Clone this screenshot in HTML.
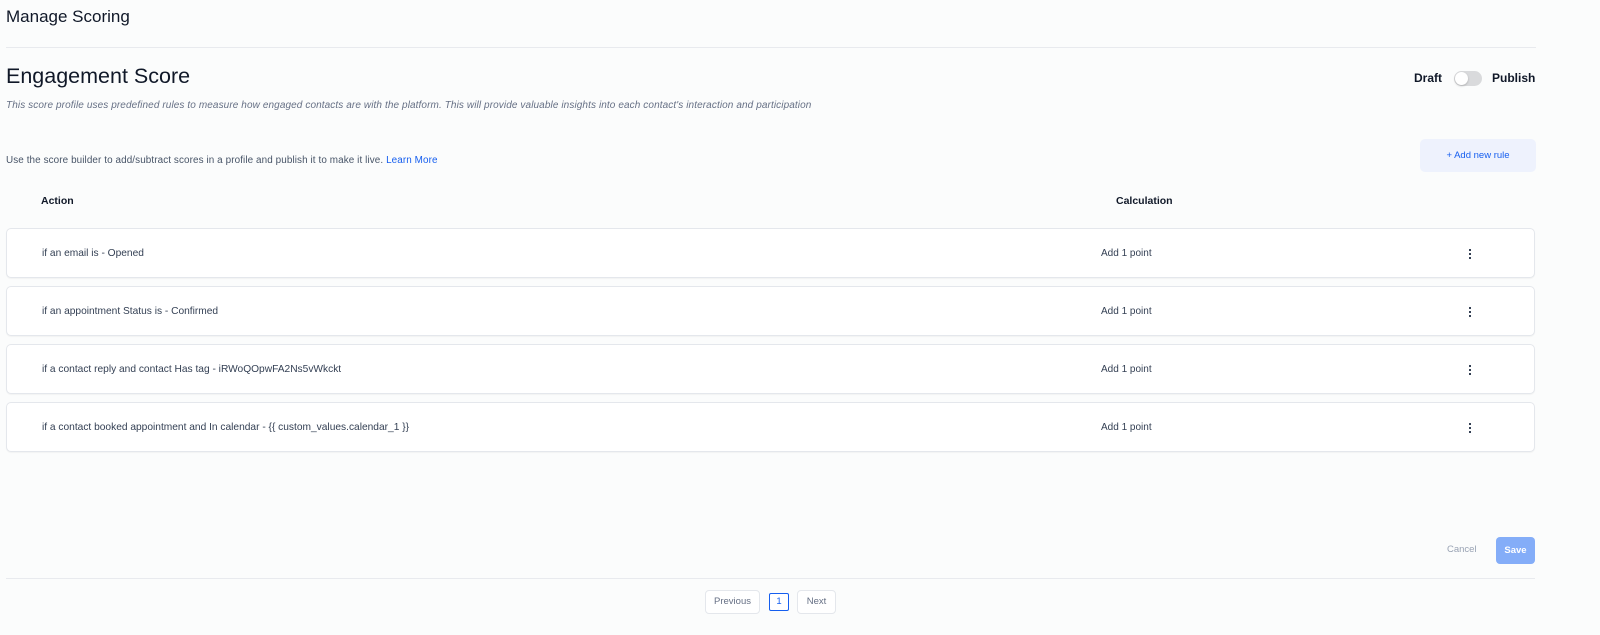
<!DOCTYPE html>
<html><head><meta charset="utf-8"><style>
*{box-sizing:border-box;margin:0;padding:0}
body{width:1600px;height:635px;background:#fbfcfc;font-family:"Liberation Sans",sans-serif;color:#101828;position:relative;overflow:hidden}
.a{position:absolute}
.card{position:absolute;left:6px;width:1529px;height:50px;background:#fff;border:1px solid #e4e7ec;border-radius:5px;box-shadow:0 1px 1px rgba(0,0,0,.04)}
.card .t{position:absolute;left:35px;top:19px;font-size:10.2px;color:#344054}
.card .c{position:absolute;left:1094px;top:19px;font-size:10px;color:#344054}
.card .d{position:absolute;left:1461px;top:20px;width:4px}
.card .d i{display:block;width:2px;height:2px;background:#344054;margin:0 0 2px 1px}
</style></head><body>
<div class="a" style="left:6px;top:7px;font-size:17px;color:#101828">Manage Scoring</div>
<div class="a" style="left:6px;top:47px;width:1530px;height:1px;background:#e8eaee"></div>
<div class="a" style="left:6px;top:64px;font-size:21.5px;color:#101828">Engagement Score</div>
<div class="a" style="left:6px;top:100px;font-size:10px;font-style:italic;color:#667085;letter-spacing:.1px">This score profile uses predefined rules to measure how engaged contacts are with the platform. This will provide valuable insights into each contact's interaction and participation</div>
<div class="a" style="left:1414px;top:71px;font-size:12px;font-weight:bold;color:#101828">Draft</div>
<div class="a" style="left:1454px;top:71px;width:28px;height:15px;border-radius:8px;background:#d9dadc"></div>
<div class="a" style="left:1455px;top:72px;width:13px;height:13px;border-radius:50%;background:#fff;box-shadow:0 1px 2px rgba(0,0,0,.2)"></div>
<div class="a" style="left:1492px;top:71px;font-size:12px;font-weight:bold;color:#101828">Publish</div>
<div class="a" style="left:6px;top:155px;font-size:9.9px;color:#475467;letter-spacing:.1px">Use the score builder to add/subtract scores in a profile and publish it to make it live. <span style="color:#155eef">Learn More</span></div>
<div class="a" style="left:1420px;top:139px;width:116px;height:33px;background:#eef2fd;border-radius:5px;font-size:9.5px;color:#155eef;text-align:center;line-height:33px">+ Add new rule</div>
<div class="a" style="left:41px;top:195px;font-size:10.5px;font-weight:bold;color:#101828">Action</div>
<div class="a" style="left:1116px;top:195px;font-size:10.5px;font-weight:bold;color:#101828">Calculation</div>
<div class="card" style="top:228px"><div class="t">if an email is - Opened</div><div class="c">Add 1 point</div><div class="d"><i></i><i></i><i></i></div></div>
<div class="card" style="top:286px"><div class="t">if an appointment Status is - Confirmed</div><div class="c">Add 1 point</div><div class="d"><i></i><i></i><i></i></div></div>
<div class="card" style="top:344px"><div class="t">if a contact reply and contact Has tag - iRWoQOpwFA2Ns5vWkckt</div><div class="c">Add 1 point</div><div class="d"><i></i><i></i><i></i></div></div>
<div class="card" style="top:402px"><div class="t">if a contact booked appointment and In calendar - {{ custom_values.calendar_1 }}</div><div class="c">Add 1 point</div><div class="d"><i></i><i></i><i></i></div></div>
<div class="a" style="left:1447px;top:544px;font-size:9.5px;color:#98a2b3">Cancel</div>
<div class="a" style="left:1496px;top:537px;width:39px;height:27px;background:#84adf8;border-radius:4px;font-size:9.5px;font-weight:bold;color:#fff;text-align:center;line-height:27px">Save</div>
<div class="a" style="left:6px;top:578px;width:1529px;height:1px;background:#e8eaee"></div>
<div class="a" style="left:705px;top:590px;width:55px;height:24px;border:1px solid #e4e7ec;border-radius:4px;background:#fff;font-size:9.5px;color:#667085;text-align:center;line-height:22px">Previous</div>
<div class="a" style="left:769px;top:593px;width:20px;height:18px;border:1px solid #155eef;border-radius:2px;background:#fff;font-size:9.5px;color:#155eef;text-align:center;line-height:16px">1</div>
<div class="a" style="left:797px;top:590px;width:39px;height:24px;border:1px solid #e4e7ec;border-radius:4px;background:#fff;font-size:9.5px;color:#667085;text-align:center;line-height:22px">Next</div>
</body></html>
